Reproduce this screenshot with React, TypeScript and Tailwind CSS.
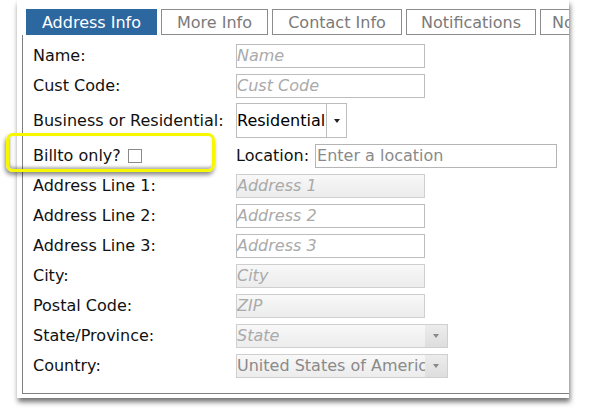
import type { ReactNode } from 'react';

const tabs = ['Address Info', 'More Info', 'Contact Info', 'Notifications', 'Notes'];
const tabWidths = ['w-[131px]', 'w-[107px]', 'w-[130px]', 'w-[130px]', 'w-[110px]'];

function Arrow({ color = 'border-t-[#222]' }: { color?: string }) {
  return <span className={`block w-0 h-0 border-x-[3px] border-x-transparent border-t-[4px] ${color}`} />;
}

function Field({ placeholder, disabled, width = 'w-[189px]' }: { placeholder: string; disabled?: boolean; width?: string }) {
  return (
    <input
      placeholder={placeholder}
      disabled={disabled}
      className={`${width} h-[24px] px-0 outline-none border text-[16px] placeholder:italic placeholder:text-[#aaaaaa] ${
        disabled
          ? 'border-[#cfcfcf] bg-gradient-to-b from-[#f8f8f8] to-[#ececec]'
          : 'border-[#bdbdbd] bg-white'
      }`}
    />
  );
}

function DisabledSelect({ children }: { children: ReactNode }) {
  return (
    <div className="flex w-[212px] h-[24px] border border-[#cfcfcf] bg-gradient-to-b from-[#f8f8f8] to-[#ececec]">
      <div className="flex-1 min-w-0 overflow-hidden whitespace-nowrap leading-[22px]">{children}</div>
      <div className="w-[22px] flex items-center justify-center bg-gradient-to-b from-[#ececec] to-[#dedede]">
        <Arrow color="border-t-[#888]" />
      </div>
    </div>
  );
}

function Row({ label, children, className = 'h-[24px] mb-[6px]' }: { label: ReactNode; children: ReactNode; className?: string }) {
  return (
    <div className={`grid grid-cols-[203px_1fr] items-center ${className}`}>
      <div className="flex items-center">{label}</div>
      <div className="flex items-center">{children}</div>
    </div>
  );
}

export default function App() {
  return (
    <div className="relative w-[590px] h-[417px] bg-white overflow-hidden font-['DejaVu_Sans',sans-serif] text-[16px] text-[#111]">
      <div className="ml-[17px] w-[552px] h-[398px] bg-white overflow-hidden pl-[5px] pt-[9px] shadow-[1px_4px_5px_rgba(0,0,0,0.55)]">
        {/* Tabs */}
        <div className="flex gap-[4px] pl-[4px] whitespace-nowrap">
          {tabs.map((t, i) => (
            <div
              key={t}
              className={`${tabWidths[i]} shrink-0 h-[26px] pt-[2px] flex items-center border ${
                i === tabs.length - 1 ? 'justify-start pl-[11px]' : 'justify-center'
              } ${i === 0 ? 'bg-[#2c67a0] border-[#2c67a0] text-white' : 'bg-white border-[#8c8c8c] text-[#7a7a7a]'}`}
            >
              {t}
            </div>
          ))}
        </div>

        {/* Form panel */}
        <div className="w-[620px] h-[359px] border-l border-b border-[#7f7f7f] pl-[10px] pt-[9px]">
          <Row label="Name:">
            <Field placeholder="Name" />
          </Row>
          <Row label="Cust Code:" className="h-[24px] mb-[5px]">
            <Field placeholder="Cust Code" />
          </Row>
          <Row label="Business or Residential:" className="h-[35px] mb-[6px]">
            <div className="flex w-[111px] h-[35px] border border-[#bdbdbd] bg-white">
              <div className="w-[89px] overflow-hidden whitespace-nowrap leading-[33px] text-black">Residential</div>
              <div className="flex-1 flex items-center justify-center border-l border-[#bdbdbd]">
                <Arrow />
              </div>
            </div>
          </Row>
          <Row
            label={
              <>
                <span>Billto only?</span>
                <span className="ml-[7px] w-[14px] h-[14px] border border-[#8a8a8a] bg-white" />
              </>
            }
          >
            <span className="mr-[6px]">Location:</span>
            <input
              placeholder="Enter a location"
              className="w-[242px] h-[24px] px-[1px] outline-none border border-[#b5b5b5] bg-white text-[16px] placeholder:text-[#8a8a8a]"
            />
          </Row>
          <Row label="Address Line 1:">
            <Field placeholder="Address 1" disabled />
          </Row>
          <Row label="Address Line 2:">
            <Field placeholder="Address 2" />
          </Row>
          <Row label="Address Line 3:">
            <Field placeholder="Address 3" />
          </Row>
          <Row label="City:">
            <Field placeholder="City" disabled />
          </Row>
          <Row label="Postal Code:">
            <Field placeholder="ZIP" disabled />
          </Row>
          <Row label="State/Province:">
            <DisabledSelect>
              <span className="italic text-[#aaaaaa]">State</span>
            </DisabledSelect>
          </Row>
          <Row label="Country:">
            <DisabledSelect>
              <span className="text-[#8a8a8a]">United States of America</span>
            </DisabledSelect>
          </Row>
        </div>
      </div>

      {/* Callout around the Billto option */}
      <div className="absolute left-[6px] top-[133px] w-[209px] h-[39px] rounded-[7px] border-[3px] border-[#f7f700] shadow-[-1px_3px_4px_rgba(0,0,0,0.45),inset_1px_-2px_3px_rgba(0,0,0,0.3)]" />
    </div>
  );
}
